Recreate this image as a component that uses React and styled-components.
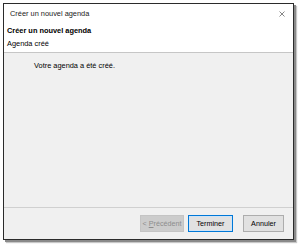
import React from 'react'
import styled, { createGlobalStyle } from 'styled-components'

const GlobalStyle = createGlobalStyle`
  html, body {
    margin: 0;
    padding: 0;
    background: #ffffff;
  }
  body {
    font-family: "Liberation Sans", Arial, sans-serif;
    font-size: 7.4px;
  }
`

const Stage = styled.div`
  width: 300px;
  height: 246px;
  padding: 3px 0 0 3px;
  box-sizing: border-box;
`

const Window = styled.div`
  width: 291px;
  height: 237px;
  box-sizing: border-box;
  border: 1px solid #2b2b2b;
  background: #f0f0f0;
  box-shadow: 2px 2px 0 #8a8a8a, 3px 3px 1px #c8c8c8;
  display: flex;
  flex-direction: column;
`

const Header = styled.div`
  background: #ffffff;
  border-bottom: 1px solid #c6c6c6;
  height: 49px;
  box-sizing: border-box;
  display: flex;
  flex-direction: column;
  flex-shrink: 0;
`

const TitleBar = styled.div`
  display: flex;
  align-items: center;
  justify-content: space-between;
  height: 19px;
  padding: 0 8px 0 6px;
  color: #1a1a1a;
`

const Close = styled.svg`
  width: 6px;
  height: 6px;
  display: block;
`

const Heading = styled.div`
  padding: 0 0 0 3px;
  margin-top: 1px;
  font-weight: bold;
  color: #000;
  line-height: 13px;
`

const Sub = styled.div`
  padding: 0 0 0 3px;
  color: #000;
  line-height: 13px;
`

const Body = styled.div`
  flex: 1;
  padding: 8px 0 0 30px;
  line-height: 10px;
  color: #000;
  border-bottom: 1px solid #d0d0d0;
`

const Footer = styled.div`
  height: 31px;
  flex-shrink: 0;
  display: flex;
  align-items: center;
  justify-content: flex-end;
  padding: 0 9px 0 0;
`

const Button = styled.button`
  width: ${p => p.w || 44}px;
  height: 17px;
  margin-left: ${p => p.ml || 0}px;
  font-family: inherit;
  font-size: 7.2px;
  padding: 0;
  background: ${p => (p.disabled ? '#cccccc' : '#e1e1e1')};
  color: ${p => (p.disabled ? '#8d8d8d' : '#000')};
  border: 1px solid ${p => (p.primary ? '#0078d7' : p.disabled ? '#c4c4c4' : '#adadad')};
  box-shadow: ${p => (p.primary ? 'inset 0 0 0 1px #cfe3f6' : 'none')};
`

export default function App() {
  return (
    <Stage>
      <GlobalStyle />
      <Window>
        <Header>
          <TitleBar>
            <span>Créer un nouvel agenda</span>
            <Close viewBox="0 0 6 6">
              <path d="M0.5 0.5 L5.5 5.5 M5.5 0.5 L0.5 5.5" stroke="#6a6a6a" strokeWidth="0.8" fill="none" />
            </Close>
          </TitleBar>
          <Heading>Créer un nouvel agenda</Heading>
          <Sub>Agenda créé</Sub>
        </Header>
        <Body>Votre agenda a été créé.</Body>
        <Footer>
          <Button disabled w={44}>&lt; <u>P</u>récédent</Button>
          <Button primary w={45} ml={4}>Terminer</Button>
          <Button w={41} ml={10}>Annuler</Button>
        </Footer>
      </Window>
    </Stage>
  )
}
